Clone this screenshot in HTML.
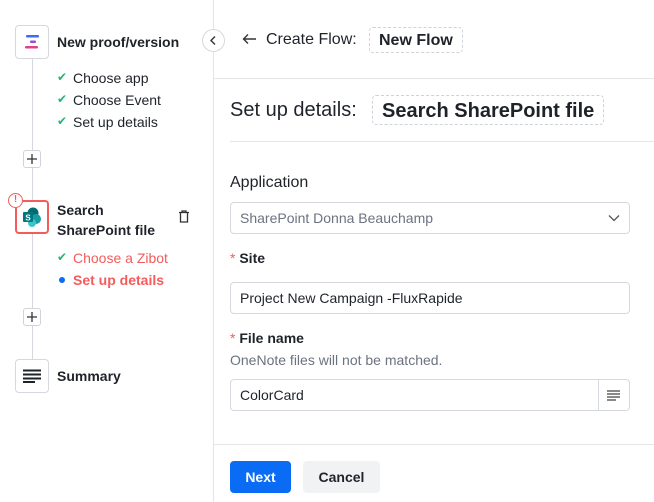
<!DOCTYPE html>
<html><head><meta charset="utf-8"><style>
*{box-sizing:border-box;margin:0;padding:0}
body{width:654px;height:502px;background:#fff;font-family:"Liberation Sans",sans-serif;color:#1f2329;position:relative;overflow:hidden}
.a{position:absolute}
.box{position:absolute;width:34px;height:34px;border:1px solid #d5d8de;border-radius:4px;background:#fff;display:flex;align-items:center;justify-content:center}
.plus{position:absolute;left:23px;width:18px;height:18px;border:1px solid #d0d3d9;border-radius:3px;background:#fff}
.t{position:absolute;font-size:14px;white-space:nowrap}
.ck{color:#22b573;font-size:12px;position:absolute;left:57px}
.inp{position:absolute;left:230px;width:400px;height:32px;border:1px solid #d5d8de;border-radius:4px;font-size:14px;padding-left:9px;line-height:30px}
.dash{position:absolute;border:1px dashed #cfd2d8;border-radius:4px;font-weight:bold;white-space:nowrap}
</style></head><body>
<div class="a" style="left:213px;top:0;width:1px;height:502px;background:#e3e5e9"></div>
<div class="a" style="left:32px;top:58px;width:1px;height:302px;background:#d5d8de"></div>

<div class="box" style="left:15px;top:25px"><svg width="18" height="16" viewBox="0 0 18 16"><rect x="3" y="1" width="13" height="2.5" rx="1" fill="#3b6cf6"/><rect x="7" y="6.5" width="6" height="2.5" rx="1" fill="#9b4dd6"/><rect x="2" y="12" width="13" height="2.5" rx="1" fill="#e0408a"/></svg></div>
<div class="t" style="left:57px;top:34px;font-weight:bold">New proof/version</div>
<span class="ck" style="top:70px">✔</span><div class="t" style="left:73px;top:70px">Choose app</div>
<span class="ck" style="top:92px">✔</span><div class="t" style="left:73px;top:92px">Choose Event</div>
<span class="ck" style="top:114px">✔</span><div class="t" style="left:73px;top:114px">Set up details</div>
<div class="plus" style="top:150px"><svg width="16" height="16" viewBox="0 0 16 16"><path d="M8 3v10M3 8h10" stroke="#333" stroke-width="1.3"/></svg></div>

<div class="box" style="left:15px;top:200px;border:2px solid #f25c5c"><svg width="22" height="20" viewBox="0 0 22 20"><circle cx="12" cy="6" r="5.5" fill="#036c70"/><circle cx="15" cy="12" r="5" fill="#1a9ba1"/><circle cx="11" cy="16" r="4" fill="#37c6d0"/><rect x="2" y="5" width="10" height="10" rx="1" fill="#03787c"/><text x="7" y="13.5" font-size="8" font-weight="bold" fill="#fff" text-anchor="middle" font-family="Liberation Sans">S</text></svg></div>
<div class="a" style="left:8px;top:193px;width:15px;height:15px;border-radius:50%;border:1.5px solid #f25c5c;background:#fff;color:#f25c5c;font-size:10px;font-weight:bold;text-align:center;line-height:12px">!</div>
<div class="t" style="left:57px;top:200px;font-weight:bold;line-height:20px">Search<br>SharePoint file</div>
<svg class="a" style="left:178px;top:210px" width="12" height="13" viewBox="0 0 12 13"><path d="M1 2.5h10M4 2.5V1h4v1.5M2.5 2.5v9.5h7V2.5" fill="none" stroke="#333" stroke-width="1.3"/></svg>
<span class="ck" style="top:250px">✔</span><div class="t" style="left:73px;top:250px;color:#f25c5c">Choose a Zibot</div>
<div class="a" style="left:59px;top:277px;width:6px;height:6px;border-radius:50%;background:#0a6cf5"></div>
<div class="t" style="left:73px;top:272px;color:#f25c5c;font-weight:bold">Set up details</div>
<div class="plus" style="top:308px"><svg width="16" height="16" viewBox="0 0 16 16"><path d="M8 3v10M3 8h10" stroke="#333" stroke-width="1.3"/></svg></div>

<div class="box" style="left:15px;top:359px"><svg width="20" height="14" viewBox="0 0 20 14"><path d="M1 1.5h18M1 5.5h18M1 9.5h18M1 13h12" stroke="#1f2329" stroke-width="2"/></svg></div>
<div class="t" style="left:57px;top:368px;font-weight:bold">Summary</div>

<div class="a" style="left:202px;top:29px;width:23px;height:23px;border-radius:50%;border:1px solid #d5d8de;background:#fff"><svg width="21" height="21" viewBox="0 0 21 21"><path d="M12 6.5l-4 4 4 4" fill="none" stroke="#333" stroke-width="1.4"/></svg></div>

<svg class="a" style="left:242px;top:33px" width="15" height="12" viewBox="0 0 15 12"><path d="M14 6H2M6 1.5L1.5 6 6 10.5" fill="none" stroke="#333" stroke-width="1.4"/></svg>
<div class="t" style="left:266px;top:31px;font-size:16px">Create Flow:</div>
<div class="dash" style="left:369px;top:27px;width:94px;height:26px;font-size:16px;padding:4px 9px">New Flow</div>
<div class="a" style="left:214px;top:78px;width:440px;height:1px;background:#e3e5e9"></div>

<div class="t" style="left:230px;top:99px;font-size:20px">Set up details:</div>
<div class="dash" style="left:372px;top:95px;width:232px;height:30px;font-size:20px;padding:4px 9px">Search SharePoint file</div>
<div class="a" style="left:230px;top:141px;width:424px;height:1px;background:#e3e5e9"></div>

<div class="t" style="left:230px;top:174px;font-size:16px">Application</div>
<div class="inp" style="top:202px;color:#6b7280">SharePoint Donna Beauchamp<svg class="a" style="right:9px;top:11px" width="12" height="8" viewBox="0 0 12 8"><path d="M1 1.5l5 5 5-5" fill="none" stroke="#555" stroke-width="1.3"/></svg></div>
<div class="t" style="left:230px;top:250px;font-weight:bold"><span style="color:#f25c5c;font-weight:normal">*</span> Site</div>
<div class="inp" style="top:282px">Project New Campaign -FluxRapide</div>
<div class="t" style="left:230px;top:330px;font-weight:bold"><span style="color:#f25c5c;font-weight:normal">*</span> File name</div>
<div class="t" style="left:230px;top:352px;color:#6b7280">OneNote files will not be matched.</div>
<div class="inp" style="top:379px">ColorCard<div class="a" style="left:367px;top:0;width:1px;height:30px;background:#d5d8de"></div><svg class="a" style="left:375px;top:10px" width="15" height="11" viewBox="0 0 15 11"><path d="M1 1h13M1 4h13M1 7h13M1 10h9" stroke="#444" stroke-width="1.2"/></svg></div>
<div class="a" style="left:214px;top:444px;width:440px;height:1px;background:#e3e5e9"></div>
<div class="a" style="left:230px;top:461px;width:61px;height:32px;background:#0a6cf5;border-radius:4px;color:#fff;font-weight:bold;font-size:14px;text-align:center;line-height:32px">Next</div>
<div class="a" style="left:303px;top:461px;width:77px;height:32px;background:#f1f2f4;border-radius:4px;color:#1f2329;font-weight:bold;font-size:14px;text-align:center;line-height:32px">Cancel</div>
</body></html>
